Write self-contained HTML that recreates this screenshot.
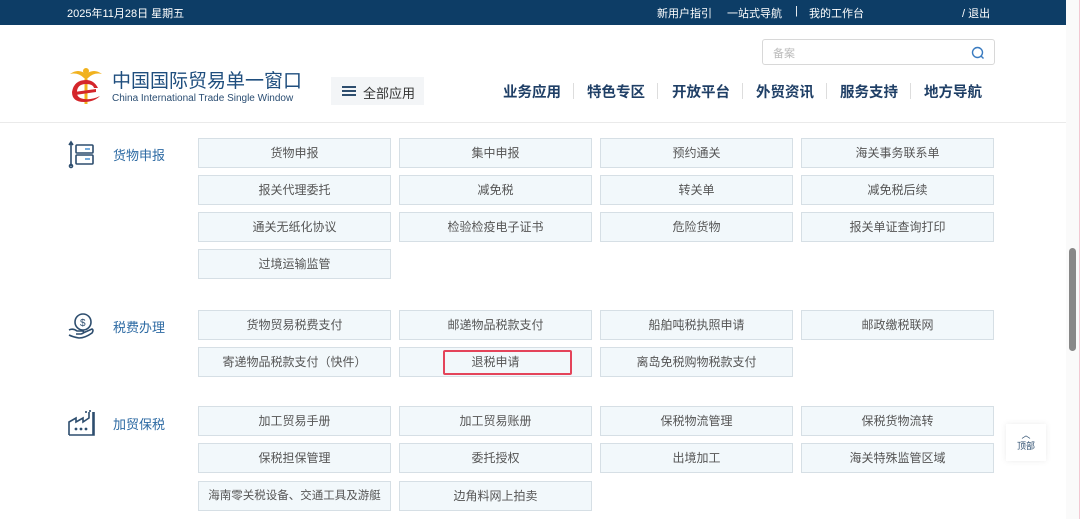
<!DOCTYPE html>
<html><head><meta charset="utf-8"><style>
*{margin:0;padding:0;box-sizing:border-box}
body{width:1080px;height:519px;overflow:hidden;background:#fff;font-family:"Liberation Sans","Noto Sans CJK SC",sans-serif;position:relative}
.top{position:absolute;left:0;top:0;width:1066px;height:25px;background:#0d3d66;color:#fff;font-size:11px}
.top span{position:absolute;top:5px}
.sb{position:absolute;right:0;top:0;width:14px;height:519px;background:#fafafa;border-right:1px solid #f3c7d2}
.thumb{position:absolute;left:3px;top:248px;width:7px;height:103px;background:#888;border-radius:4px}
.hdr{position:absolute;left:0;top:122px;width:1066px;height:1px;background:#eaeaea}
.logo-cn{position:absolute;left:112px;top:66px;font-size:19px;color:#1f4e7e;letter-spacing:0}
.logo-en{position:absolute;left:112px;top:93px;font-size:10px;color:#2a4d72}
.all{position:absolute;left:331px;top:77px;width:93px;height:28px;background:#f3f5f7;font-size:13px;color:#333;padding:6px 0 0 32px}
.all i{position:absolute;left:11px;top:9px;width:14px;height:10px;border-top:2px solid #2d4d6e;border-bottom:2px solid #2d4d6e}
.all i:after{content:"";position:absolute;left:0;top:2px;width:14px;height:2px;background:#2d4d6e}
.search{position:absolute;left:762px;top:39px;width:233px;height:26px;border:1px solid #d8d8d8;border-radius:3px;font-size:11px;color:#bbb;padding:5px 0 0 10px}
.nav{position:absolute;top:81px;font-size:14.5px;font-weight:bold;color:#1f3f66;transform:translateX(-50%)}
.sep{position:absolute;top:83px;width:1px;height:16px;background:#ddd}
.b{position:absolute;width:193px;height:30px;background:#f2f8fb;border:1px solid #d6dfe5;font-size:12px;color:#555;text-align:center;line-height:28px}
.lab{position:absolute;left:113px;font-size:13px;color:#2d6aa3}
.red{position:absolute;left:443px;top:350px;width:129px;height:25px;border:2px solid #e4445a;border-radius:2px}
.tp{position:absolute;left:1006px;top:424px;width:40px;height:37px;background:#fff;box-shadow:0 0 6px rgba(0,0,0,.08);font-size:9px;color:#2d4d6e;text-align:center;padding-top:6px;line-height:11px}
</style></head><body>
<div class="top"><span style="left:67px">2025年11月28日 星期五</span><span style="left:657px">新用户指引</span><span style="left:727px">一站式导航</span><span style="left:795px">|</span><span style="left:809px">我的工作台</span><span style="left:962px">/ 退出</span></div>
<div class="sb"><div class="thumb"></div></div>
<svg style="position:absolute;left:66px;top:62px" width="40" height="46" viewBox="0 0 40 46">
<path d="M4 12 Q12 6 20 12 Q28 6 36 12 Q28 10 22 16 L18 16 Q12 10 4 12Z" fill="#f1b21e"/>
<circle cx="20" cy="9" r="3" fill="#f1b21e"/>
<rect x="18.5" y="12" width="3" height="30" fill="#f1b21e"/>
<path d="M32 26 Q28 18 20 18 Q8 18 6 30 Q6 40 18 40 Q28 40 34 34 Q26 38 18 37 Q10 36 11 29 Q12 22 20 22 Q27 22 28 26Z" fill="#d4262b"/>
<path d="M8 30 L30 27 L30 30 L9 33Z" fill="#d4262b"/>
</svg>
<div class="logo-cn">中国国际贸易单一窗口</div>
<div class="logo-en">China International Trade Single Window</div>
<div class="all"><i></i>全部应用</div>
<div class="search">备案<svg style="position:absolute;right:9px;top:6px" width="14" height="14" viewBox="0 0 14 14"><circle cx="6.5" cy="6.5" r="5" fill="none" stroke="#3a7bc0" stroke-width="1.4"/><path d="M10 10 L12.5 12.5" stroke="#3a7bc0" stroke-width="1.4"/></svg></div>
<div class="nav" style="left:532px">业务应用</div><div class="sep" style="left:573px"></div>
<div class="nav" style="left:616px">特色专区</div><div class="sep" style="left:657px"></div>
<div class="nav" style="left:701px">开放平台</div><div class="sep" style="left:742px"></div>
<div class="nav" style="left:785px">外贸资讯</div><div class="sep" style="left:826px"></div>
<div class="nav" style="left:869px">服务支持</div><div class="sep" style="left:910px"></div>
<div class="nav" style="left:953px">地方导航</div>
<div class="hdr"></div>

<svg style="position:absolute;left:66px;top:139px" width="30" height="30" viewBox="0 0 30 30" fill="none" stroke="#2d4d6e" stroke-width="1.6"><path d="M5 27 V3 M3 6 L5 3 L7 6"/><circle cx="5" cy="27" r="1.5"/><rect x="10" y="6" width="17" height="8" rx="1"/><rect x="10" y="16" width="17" height="9" rx="1"/><path d="M19 10h5 M19 20h5" stroke="#4a90d0"/></svg>
<div class="lab" style="top:145px">货物申报</div>
<svg style="position:absolute;left:67px;top:311px" width="30" height="30" viewBox="0 0 30 30" fill="none" stroke="#2d4d6e" stroke-width="1.6"><circle cx="16" cy="11" r="8"/><text x="13" y="15" font-size="10" fill="#2d4d6e" stroke="none" font-family="Liberation Sans">$</text><path d="M2 19 Q6 17 10 20 L16 20 Q18 22 14 23 L9 23 M16 22 L25 18 Q27 19 25 22 Q18 27 12 27 Q6 26 2 24"/></svg>
<div class="lab" style="top:317px">税费办理</div>
<svg style="position:absolute;left:67px;top:408px" width="30" height="30" viewBox="0 0 30 30" fill="none" stroke="#2d4d6e" stroke-width="1.6"><path d="M2 27 V14 L9 10 V14 L16 10 V14 L22 10 V4 M26 4 V27 Z M2 27 H27 V4"/><path d="M19 3v2 M23 2v2" /><circle cx="9" cy="21" r=".6" fill="#2d4d6e"/><circle cx="14" cy="21" r=".6" fill="#2d4d6e"/><circle cx="19" cy="21" r=".6" fill="#2d4d6e"/></svg>
<div class="lab" style="top:414px">加贸保税</div>

<div class="b" style="left:198px;top:138px">货物申报</div><div class="b" style="left:399px;top:138px">集中申报</div><div class="b" style="left:600px;top:138px">预约通关</div><div class="b" style="left:801px;top:138px">海关事务联系单</div>
<div class="b" style="left:198px;top:175px">报关代理委托</div><div class="b" style="left:399px;top:175px">减免税</div><div class="b" style="left:600px;top:175px">转关单</div><div class="b" style="left:801px;top:175px">减免税后续</div>
<div class="b" style="left:198px;top:212px">通关无纸化协议</div><div class="b" style="left:399px;top:212px">检验检疫电子证书</div><div class="b" style="left:600px;top:212px">危险货物</div><div class="b" style="left:801px;top:212px">报关单证查询打印</div>
<div class="b" style="left:198px;top:249px">过境运输监管</div>

<div class="b" style="left:198px;top:310px">货物贸易税费支付</div><div class="b" style="left:399px;top:310px">邮递物品税款支付</div><div class="b" style="left:600px;top:310px">船舶吨税执照申请</div><div class="b" style="left:801px;top:310px">邮政缴税联网</div>
<div class="b" style="left:198px;top:347px">寄递物品税款支付（快件）</div><div class="b" style="left:399px;top:347px">退税申请</div><div class="b" style="left:600px;top:347px">离岛免税购物税款支付</div>
<div class="red"></div>

<div class="b" style="left:198px;top:406px">加工贸易手册</div><div class="b" style="left:399px;top:406px">加工贸易账册</div><div class="b" style="left:600px;top:406px">保税物流管理</div><div class="b" style="left:801px;top:406px">保税货物流转</div>
<div class="b" style="left:198px;top:443px">保税担保管理</div><div class="b" style="left:399px;top:443px">委托授权</div><div class="b" style="left:600px;top:443px">出境加工</div><div class="b" style="left:801px;top:443px">海关特殊监管区域</div>
<div class="b" style="left:198px;top:481px;font-size:11.5px">海南零关税设备、交通工具及游艇</div><div class="b" style="left:399px;top:481px">边角料网上拍卖</div>

<div class="tp">︿<br>顶部</div>
</body></html>
